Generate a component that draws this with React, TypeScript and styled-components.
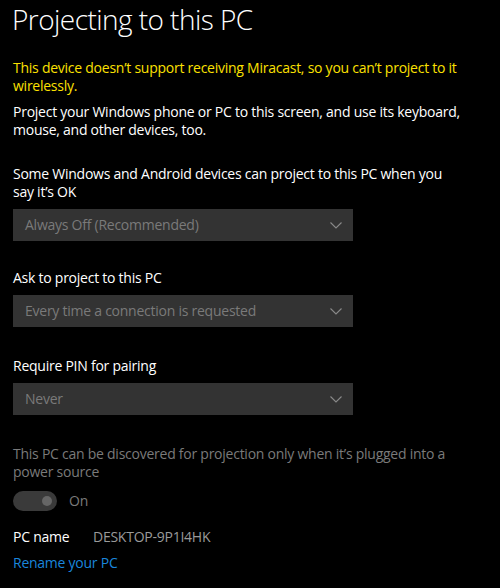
import React from "react";
import styled, { createGlobalStyle } from "styled-components";

const Global = createGlobalStyle`
  html, body { margin: 0; padding: 0; background: #000; }
  body { font-family: "Open Sans", "Noto Sans", sans-serif; color: #fff; }
  * { box-sizing: border-box; }
`;

const Page = styled.div`
  width: 500px;
  height: 588px;
  background: #000;
  padding: 0 0 0 13px;
  overflow: hidden;
  display: flex;
  flex-direction: column;
  align-items: flex-start;
  font-size: 14px;
  line-height: 18px;
  letter-spacing: -0.25px;
`;

const Title = styled.h1`
  margin: 0;
  margin-left: -1px;
  font-size: 28px;
  font-weight: 300;
  line-height: 38px;
  letter-spacing: -0.55px;
  color: #fff;
`;

const Text = styled.p<{ $tone?: "warn" | "normal" | "muted"; $mt: number; $narrow?: boolean }>`
  margin: ${(p) => p.$mt}px 0 0 0;
  max-width: ${(p) => (p.$narrow ? 450 : 475)}px;
  color: ${(p) =>
    p.$tone === "warn" ? "#fce100" : p.$tone === "muted" ? "#7a7a7a" : "#fff"};
`;

const Select = styled.div`
  margin-top: 8px;
  width: 340px;
  height: 32px;
  background: #333333;
  display: flex;
  align-items: center;
  justify-content: space-between;
  padding: 0 11px 0 12px;
  color: #7a7a7a;
`;

const ToggleRow = styled.div`
  margin-top: 10px;
  display: flex;
  align-items: center;
  gap: 12px;
  color: #7a7a7a;
  height: 20px;
`;

const Track = styled.div`
  width: 44px;
  height: 20px;
  border-radius: 10px;
  background: #3a3a3a;
  display: flex;
  align-items: center;
  justify-content: flex-end;
  padding-right: 5px;
`;

const Knob = styled.div`
  width: 10px;
  height: 10px;
  border-radius: 50%;
  background: #666666;
`;

const NameRow = styled.div`
  margin-top: 17px;
  display: flex;
`;

const NameLabel = styled.span`
  width: 80px;
  color: #fff;
`;

const NameValue = styled.span`
  color: #9a9a9a;
`;

const Link = styled.a`
  margin-top: 8px;
  color: #1a86dc;
  text-decoration: none;
`;

const Chevron = () => (
  <svg width="12" height="7" viewBox="0 0 12 7">
    <path d="M0.5 0.5 L6 6 L11.5 0.5" fill="none" stroke="#8a8a8a" strokeWidth="1.1" />
  </svg>
);

const Dropdown = ({ value }: { value: string }) => (
  <Select>
    <span>{value}</span>
    <Chevron />
  </Select>
);

export default function App() {
  return (
    <>
      <Global />
      <Page>
        <Title>Projecting to this PC</Title>
        <Text $tone="warn" $mt={21}>
          This device doesn’t support receiving Miracast, so you can’t project to it
          wirelessly.
        </Text>
        <Text $mt={8}>
          Project your Windows phone or PC to this screen, and use its keyboard,
          mouse, and other devices, too.
        </Text>
        <Text $mt={26} $narrow>
          Some Windows and Android devices can project to this PC when you say it’s OK
        </Text>
        <Dropdown value="Always Off (Recommended)" />
        <Text $mt={28}>Ask to project to this PC</Text>
        <Dropdown value="Every time a connection is requested" />
        <Text $mt={30}>Require PIN for pairing</Text>
        <Dropdown value="Never" />
        <Text $tone="muted" $mt={30} $narrow>
          This PC can be discovered for projection only when it’s plugged into a
          power source
        </Text>
        <ToggleRow>
          <Track>
            <Knob />
          </Track>
          <span>On</span>
        </ToggleRow>
        <NameRow>
          <NameLabel>PC name</NameLabel>
          <NameValue>DESKTOP-9P1I4HK</NameValue>
        </NameRow>
        <Link href="#">Rename your PC</Link>
      </Page>
    </>
  );
}
